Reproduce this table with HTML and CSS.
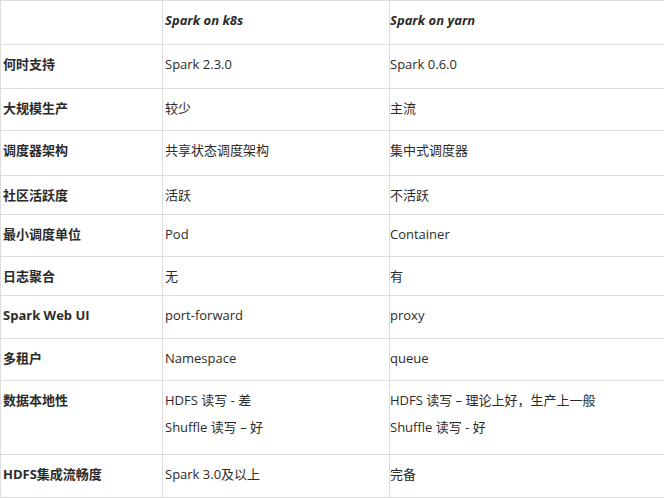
FILE: index.html
```html
<!DOCTYPE html>
<html lang="zh-CN">
<head>
<meta charset="utf-8">
<title>Spark on k8s vs yarn</title>
<link rel="stylesheet" href="styles.css">
</head>
<body>
<table class="cmp">
  <colgroup>
    <col class="c1"><col class="c2"><col class="c3">
  </colgroup>
  <thead>
    <tr class="h44"><th></th><th><em>Spark on k8s</em></th><th><em>Spark on yarn</em></th></tr>
  </thead>
  <tbody>
    <tr class="h44"><th>何时支持</th><td>Spark 2.3.0</td><td>Spark 0.6.0</td></tr>
    <tr class="h42"><th>大规模生产</th><td>较少</td><td>主流</td></tr>
    <tr class="h45"><th>调度器架构</th><td>共享状态调度架构</td><td>集中式调度器</td></tr>
    <tr class="h39"><th>社区活跃度</th><td>活跃</td><td>不活跃</td></tr>
    <tr class="h42"><th>最小调度单位</th><td>Pod</td><td>Container</td></tr>
    <tr class="h39"><th>日志聚合</th><td>无</td><td>有</td></tr>
    <tr class="h43"><th>Spark Web UI</th><td>port-forward</td><td>proxy</td></tr>
    <tr class="h42"><th>多租户</th><td>Namespace</td><td>queue</td></tr>
    <tr class="h74"><th>数据本地性</th><td>HDFS 读写 - 差<br>Shuffle 读写 – 好</td><td>HDFS 读写 – 理论上好，生产上一般<br>Shuffle 读写 - 好</td></tr>
    <tr class="h43"><th>HDFS集成流畅度</th><td>Spark 3.0及以上</td><td>完备</td></tr>
  </tbody>
</table>
</body>
</html>
```
FILE: styles.css
```css
html, body {
  margin: 0;
  padding: 0;
  background: #fff;
  overflow: hidden;
}
.cmp {
  border-collapse: collapse;
  table-layout: fixed;
  width: 680px;
  font-family: "Open Sans", "Noto Sans CJK SC", sans-serif;
  font-size: 13px;
  color: #2b2b2b;
}
.c1 { width: 162px; }
.c2 { width: 227px; }
.c3 { width: 291px; }
.cmp th, .cmp td {
  border: 1px solid #dcdcdc;
  padding: 6px 2px 0 2px;
  line-height: 27px;
  vertical-align: top;
  text-align: left;
}
.cmp th:last-child, .cmp td:last-child { padding-left: 0; }
.cmp th { font-weight: bold; }
.cmp td { font-weight: normal; }
.cmp em { font-style: italic; }
.h39 { height: 39px; }
.h42 { height: 42px; }
.h43 { height: 43px; }
.h44 { height: 44px; }
.h45 { height: 45px; }
.h74 { height: 74px; }
```
